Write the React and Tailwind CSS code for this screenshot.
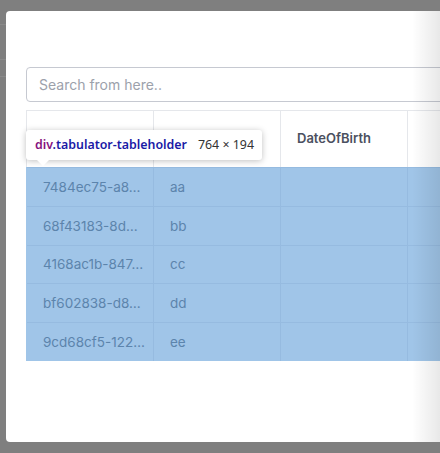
import React from 'react';

const rows = [
  { id: '7484ec75-a8…', name: 'aa' },
  { id: '68f43183-8d…', name: 'bb' },
  { id: '4168ac1b-847…', name: 'cc' },
  { id: 'bf602838-d8…', name: 'dd' },
  { id: '9cd68cf5-122…', name: 'ee' },
];

// header titles under the tooltip / past the edge are not visible
const headers = ['', '', 'DateOfBirth', '', '', ''];

const App = () => {
  return (
    <div className="relative flex h-[453px] w-[440px] overflow-hidden bg-[#7f7f7f] font-['Inter',sans-serif]">
      {/* page behind the backdrop */}
      <div className="flex w-[6px] shrink-0 flex-col">
        <div className="h-[25px] border-b border-[#8a8a8a]" />
        <div className="h-[35px] border-b border-[#8a8a8a]" />
        <div className="h-[17px] border-b border-[#8a8a8a]" />
      </div>

      {/* modal */}
      <div className="relative mt-[11px] h-[431px] w-[800px] shrink-0 rounded-[4px] bg-white px-5 pt-[56px]">
        <input
          type="text"
          placeholder="Search from here.."
          className="h-[35px] w-full rounded-[4px] border border-[#c6c9d1] px-3 text-[14px] text-gray-700 outline-none placeholder:text-[#9ca1ab]"
        />

        <div className="relative mt-[8px] w-[764px] border-l border-t border-[#e5e7eb]">
          <div className="flex h-[56px]">
            {headers.map((h, i) => (
              <div
                key={i}
                className="flex w-[127px] shrink-0 items-center border-r border-[#e5e7eb] px-4 text-[13px] font-semibold text-[#4b5060]"
              >
                {h}
              </div>
            ))}
          </div>

          {/* tableholder, painted with the devtools highlight */}
          <div className="-ml-px h-[194px] border-l border-[#a0c5e8] bg-[#a0c5e8]">
            {rows.map((r) => (
              <div key={r.name} className="flex h-[38.8px] border-t border-[#96bbe0] text-[13.5px] text-[#5c84ac]">
                <div className="flex w-[127px] shrink-0 items-center whitespace-nowrap border-r border-[#96bbe0] pl-4">
                  {r.id}
                </div>
                <div className="flex w-[127px] shrink-0 items-center border-r border-[#96bbe0] px-4">{r.name}</div>
                <div className="w-[127px] shrink-0 border-r border-[#96bbe0]" />
                <div className="w-[127px] shrink-0 border-r border-[#96bbe0]" />
                <div className="w-[127px] shrink-0 border-r border-[#96bbe0]" />
                <div className="w-[127px] shrink-0" />
              </div>
            ))}
          </div>

          {/* devtools tooltip */}
          <div className="absolute -left-px top-[19px] flex h-[30px] items-center gap-[11px] whitespace-nowrap rounded-[3px] bg-white pl-[9px] pr-[8px] font-['Noto_Sans',sans-serif] text-[12.4px] shadow-[0_1px_6px_rgba(0,0,0,0.25)]">
            <span className="font-semibold">
              <span className="text-[#881280]">div</span>
              <span className="text-[#1a1aa6]">.tabulator-tableholder</span>
            </span>
            <span className="text-[#333]">764 × 194</span>
            <div className="absolute left-[10px] top-[29px] h-0 w-0 border-x-[7px] border-t-[7px] border-x-transparent border-t-white" />
          </div>
        </div>

        {/* horizontal scroll shadow */}
        <div className="pointer-events-none absolute bottom-0 left-[406px] top-0 w-[28px] bg-gradient-to-r from-transparent to-[rgba(0,0,0,0.09)]" />
      </div>
    </div>
  );
};

export default App;
